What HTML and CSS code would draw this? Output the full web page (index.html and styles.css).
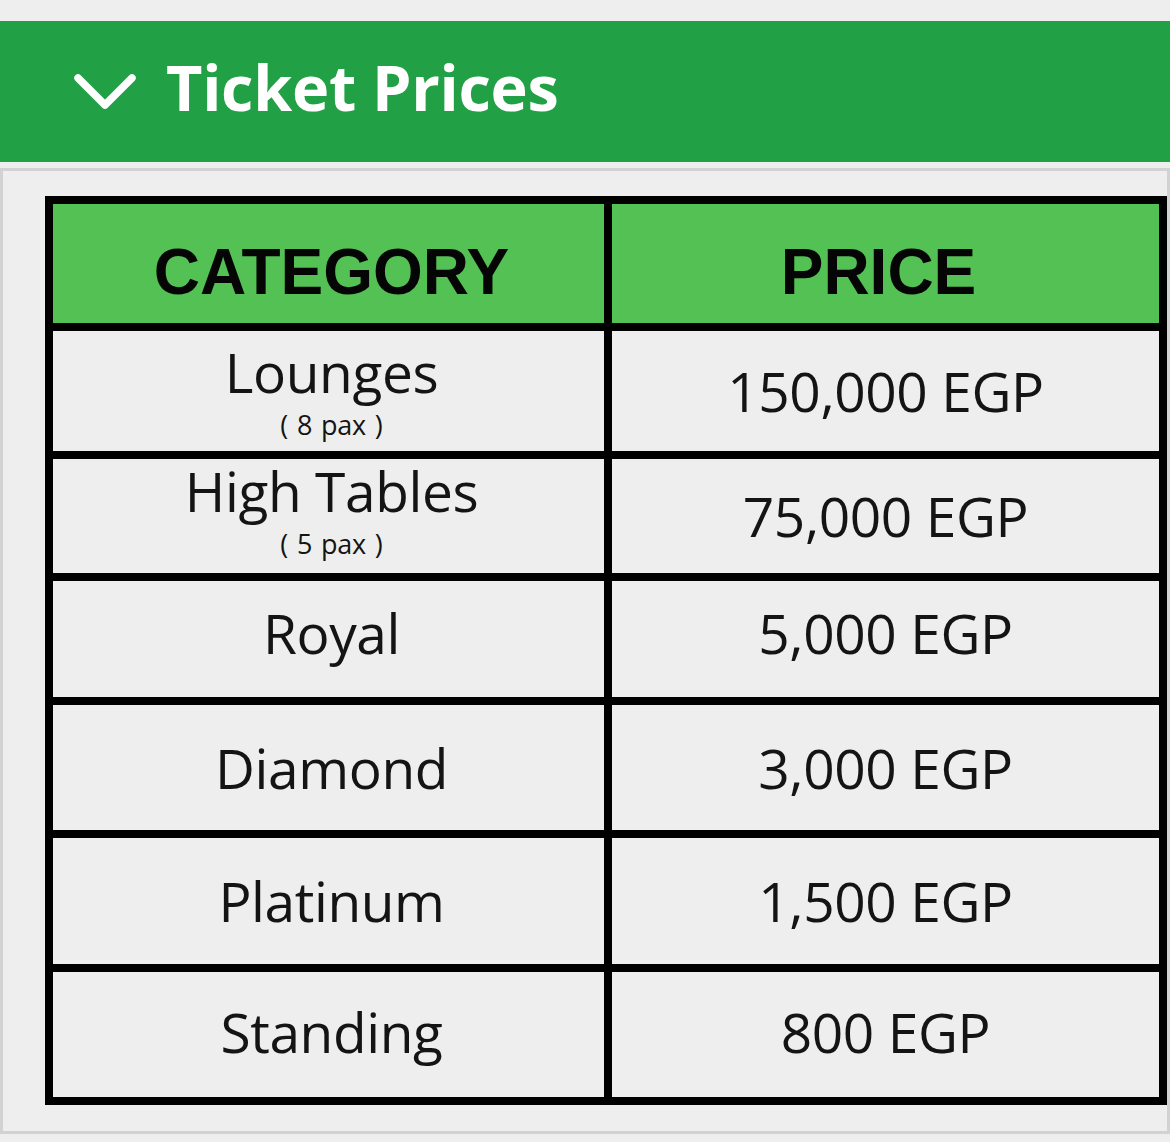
FILE: index.html
```html
<!DOCTYPE html>
<html lang="en">
<head>
<meta charset="utf-8">
<title>Ticket Prices</title>
<link rel="stylesheet" href="styles.css">
</head>
<body>
<div class="page">
  <header class="acc-head">
    <svg class="chev" width="62" height="35" viewBox="0 0 62 35" aria-hidden="true">
      <path d="M4 4 L31 31 L58 4" fill="none" stroke="#fff" stroke-width="7.5" stroke-linecap="round" stroke-linejoin="round"/>
    </svg>
    <h1 class="acc-title">Ticket Prices</h1>
  </header>
  <section class="panel">
    <table class="prices">
      <thead>
        <tr class="h-head">
          <th class="cat">CATEGORY</th>
          <th class="price">PRICE</th>
        </tr>
      </thead>
      <tbody>
        <tr class="h-lounge">
          <td class="cat multi lounge"><span class="name">Lounges</span><span class="pax">( 8 pax )</span></td>
          <td class="price">150,000 EGP</td>
        </tr>
        <tr class="h-high">
          <td class="cat multi high"><span class="name">High Tables</span><span class="pax">( 5 pax )</span></td>
          <td class="price">75,000 EGP</td>
        </tr>
        <tr class="h-royal">
          <td class="cat">Royal</td>
          <td class="price">5,000 EGP</td>
        </tr>
        <tr class="h-mid">
          <td class="cat">Diamond</td>
          <td class="price">3,000 EGP</td>
        </tr>
        <tr class="h-plat">
          <td class="cat">Platinum</td>
          <td class="price">1,500 EGP</td>
        </tr>
        <tr class="h-last">
          <td class="cat">Standing</td>
          <td class="price">800 EGP</td>
        </tr>
      </tbody>
    </table>
  </section>
</div>
</body>
</html>
```
FILE: styles.css
```css
html, body {
  margin: 0;
  padding: 0;
  background: #eeeeee;
}

.page {
  width: 1170px;
  padding-top: 21px;
  padding-bottom: 8px;
}

.acc-head {
  box-sizing: border-box;
  height: 141px;
  background: #22a045;
  display: flex;
  align-items: center;
  padding: 0 0 10px 74px;
}

.chev {
  display: block;
  margin-top: 10px;
  flex: none;
}

.acc-title {
  margin: 0 0 0 30px;
  font-family: "Open Sans", "Noto Sans", sans-serif;
  font-weight: 700;
  font-size: 63px;
  line-height: 64px;
  color: #ffffff;
  letter-spacing: -0.3px;
}

.panel {
  box-sizing: border-box;
  width: 1170px;
  margin-top: 6px;
  border: 3px solid #d2d2d2;
  padding: 25px 0 26px 42px;
  background: #eeeeee;
}

.prices {
  width: 1122px;
  table-layout: fixed;
  border-collapse: separate;
  border-spacing: 8px;
  background: #000000;
}

.prices th,
.prices td {
  padding: 0;
  text-align: center;
  vertical-align: middle;
  background: #eeeeee;
  color: #141414;
}

.prices th.cat,
.prices td.cat {
  width: 551px;
  padding-left: 6px;
  box-sizing: border-box;
}

.prices th {
  background: #53c153;
  color: #050505;
  font-family: "Liberation Sans", Arial, sans-serif;
  font-weight: 700;
  font-size: 64px;
  line-height: 70px;
  padding-top: 17px;
}

.prices th.price {
  padding-right: 14px;
}

.prices td {
  font-family: "Open Sans", "Noto Sans", sans-serif;
  font-weight: 500;
  font-size: 55px;
  line-height: 66px;
  letter-spacing: -0.4px;
}

.prices td.multi {
  vertical-align: top;
}

.prices td.lounge {
  padding-top: 11px;
}

.prices td.high {
  padding-top: 2px;
}

.h-royal td {
  padding-bottom: 12px;
}

.h-last td {
  padding-bottom: 5px;
}

.name {
  display: block;
  line-height: 60px;
}

.pax {
  display: block;
  font-size: 27px;
  line-height: 45px;
  word-spacing: 2px;
  letter-spacing: -0.2px;
}

.h-head { height: 119px; }
.h-lounge { height: 120px; }
.h-high { height: 114px; }
.h-royal { height: 116px; }
.h-mid { height: 125px; }
.h-plat { height: 126px; }
.h-last { height: 125px; }
```
